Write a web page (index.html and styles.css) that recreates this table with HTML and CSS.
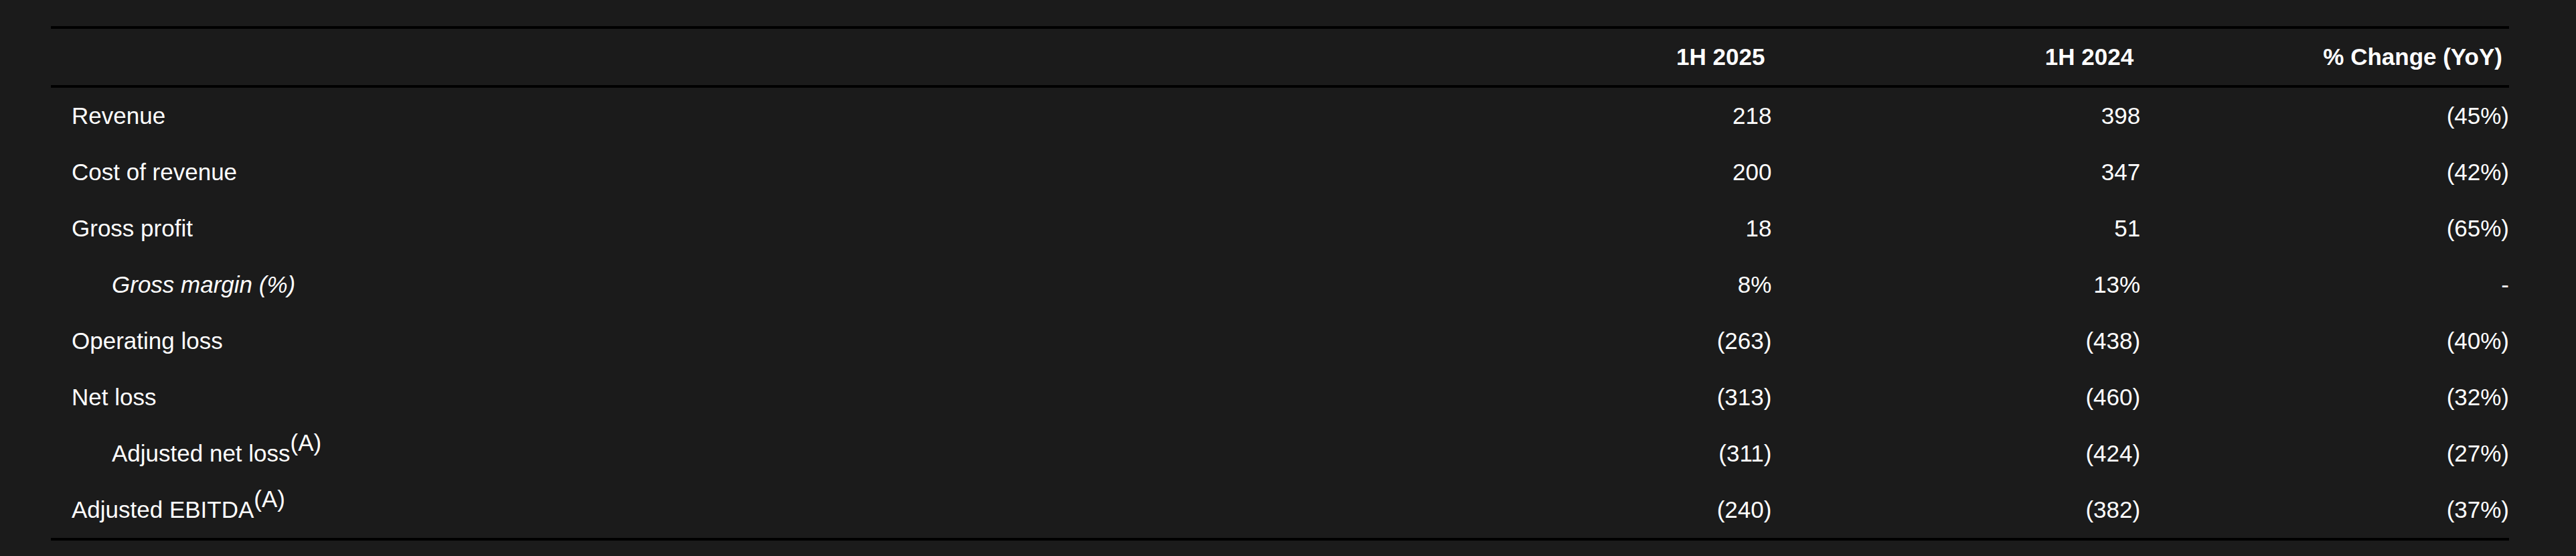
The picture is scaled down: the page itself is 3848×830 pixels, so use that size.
FILE: index.html
```html
<!DOCTYPE html>
<html lang="en">
<head>
<meta charset="utf-8">
<title>1H 2025 results</title>
<link rel="stylesheet" href="styles.css">
</head>
<body>
<main class="page">
  <table class="fin-table">
    <colgroup>
      <col class="col-label">
      <col class="col-num">
      <col class="col-num">
      <col class="col-num">
    </colgroup>
    <thead>
      <tr>
        <th class="head-label"></th>
        <th class="head-num">1H 2025</th>
        <th class="head-num">1H 2024</th>
        <th class="head-num">% Change (YoY)</th>
      </tr>
    </thead>
    <tbody>
      <tr>
        <td class="label">Revenue</td>
        <td class="num">218</td>
        <td class="num">398</td>
        <td class="num">(45%)</td>
      </tr>
      <tr>
        <td class="label">Cost of revenue</td>
        <td class="num">200</td>
        <td class="num">347</td>
        <td class="num">(42%)</td>
      </tr>
      <tr>
        <td class="label">Gross profit</td>
        <td class="num">18</td>
        <td class="num">51</td>
        <td class="num">(65%)</td>
      </tr>
      <tr>
        <td class="label indent italic">Gross margin (%)</td>
        <td class="num">8%</td>
        <td class="num">13%</td>
        <td class="num">-</td>
      </tr>
      <tr>
        <td class="label">Operating loss</td>
        <td class="num">(263)</td>
        <td class="num">(438)</td>
        <td class="num">(40%)</td>
      </tr>
      <tr>
        <td class="label">Net loss</td>
        <td class="num">(313)</td>
        <td class="num">(460)</td>
        <td class="num">(32%)</td>
      </tr>
      <tr>
        <td class="label indent">Adjusted net loss<sup class="note">(A)</sup></td>
        <td class="num">(311)</td>
        <td class="num">(424)</td>
        <td class="num">(27%)</td>
      </tr>
      <tr class="last-row">
        <td class="label">Adjusted EBITDA<sup class="note">(A)</sup></td>
        <td class="num">(240)</td>
        <td class="num">(382)</td>
        <td class="num">(37%)</td>
      </tr>
    </tbody>
  </table>
</main>
</body>
</html>
```

FILE: styles.css
```css
html, body {
  margin: 0;
  padding: 0;
  background: #1b1b1b;
}

body {
  font-family: "Liberation Sans", Arial, Helvetica, sans-serif;
  font-size: 35px;
  color: #ffffff;
}

.page {
  padding: 39px 100px 23px 76px;
}

.fin-table {
  width: 100%;
  table-layout: fixed;
  border-collapse: separate;
  border-spacing: 0;
}

.col-label {
  width: 55%;
}

.col-num {
  width: 15%;
}

.fin-table th {
  height: 84px;
  padding: 0;
  font-weight: 700;
  border-top: 4px solid #000;
  border-bottom: 4px solid #000;
  vertical-align: middle;
}

.head-num {
  text-align: right;
  padding-right: 10px !important;
}

.fin-table td {
  height: 84px;
  padding: 0;
  vertical-align: middle;
  white-space: nowrap;
}

.label {
  text-align: left;
  padding-left: 31px !important;
}

.label.indent {
  padding-left: 91px !important;
}

.italic {
  font-style: italic;
}

.num {
  text-align: right;
}

.note {
  font-size: inherit;
  line-height: 0;
  vertical-align: 16px;
}

.last-row td {
  border-bottom: 4px solid #000;
}
```
